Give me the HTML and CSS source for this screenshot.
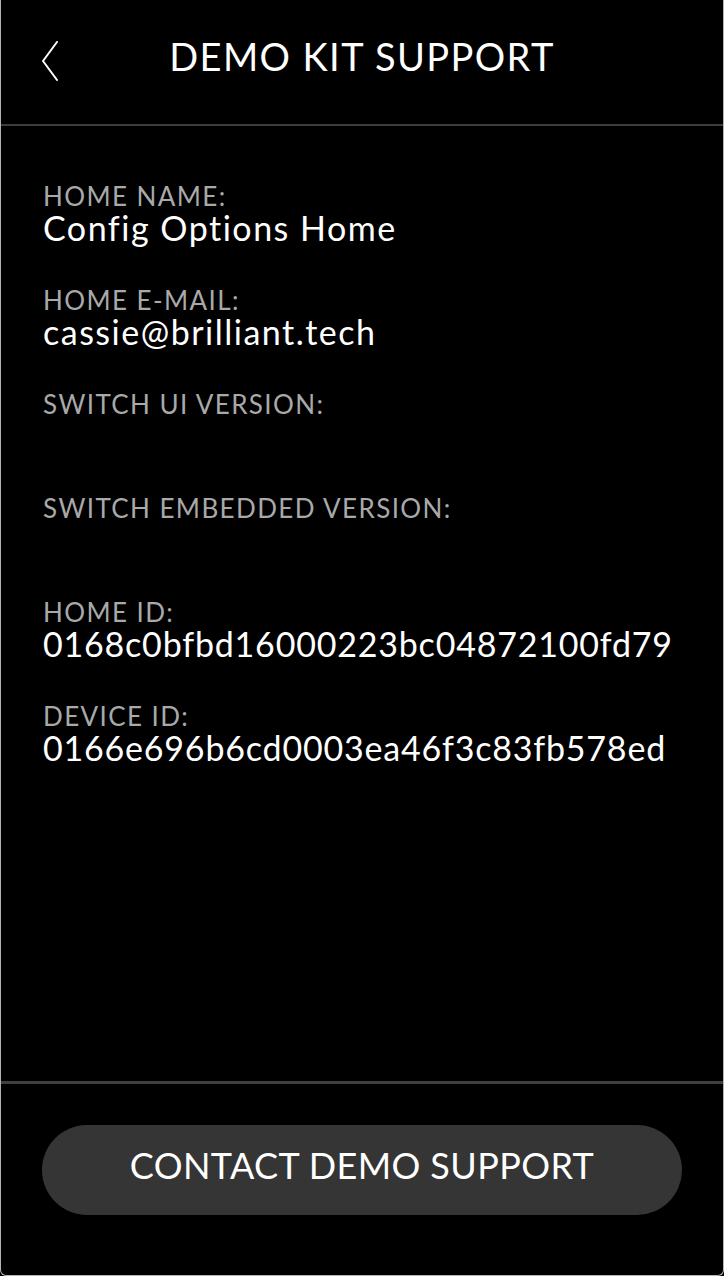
FILE: index.html
```html
<!DOCTYPE html>
<html>
<head>
    <title>Demo Kit Support</title>
    <link rel="stylesheet" href="styles.css">
</head>
<body>
    <div class="screen">
        <!-- Top bar -->
        <header class="top-bar">
            <button class="back-btn" type="button" aria-label="Back">
                <svg width="17" height="40" viewBox="0 0 17 40">
                    <path d="M16 1 L2 20 L16 39" fill="none" stroke="#fff" stroke-width="2" stroke-linecap="round" stroke-linejoin="round"/>
                </svg>
            </button>
            <h1 class="title">DEMO KIT SUPPORT</h1>
            <span class="spacer"></span>
        </header>

        <!-- Support details -->
        <main class="details">
            <div class="item">
                <div class="label">HOME NAME:</div>
                <div class="value">Config Options Home</div>
            </div>
            <div class="item">
                <div class="label">HOME E-MAIL:</div>
                <div class="value">cassie@brilliant.tech</div>
            </div>
            <div class="item">
                <div class="label">SWITCH UI VERSION:</div>
                <div class="value"></div>
            </div>
            <div class="item">
                <div class="label">SWITCH EMBEDDED VERSION:</div>
                <div class="value"></div>
            </div>
            <div class="item">
                <div class="label">HOME ID:</div>
                <div class="value id">0168c0bfbd16000223bc04872100fd79</div>
            </div>
            <div class="item">
                <div class="label">DEVICE ID:</div>
                <div class="value id">0166e696b6cd0003ea46f3c83fb578ed</div>
            </div>
        </main>

        <!-- Footer action -->
        <footer class="footer">
            <button class="contact-btn" type="button">CONTACT DEMO SUPPORT</button>
        </footer>
    </div>
</body>
</html>
```

FILE: styles.css
```css
html, body {
    margin: 0;
    padding: 0;
    background-color: #000;
}

body {
    font-family: Lato, "Noto Sans", sans-serif;
    color: #fff;
}

.screen {
    box-sizing: border-box;
    height: 1276px;
    display: flex;
    flex-direction: column;
    border-left: 1px solid #b4b4b4;
    border-right: 1px solid #b4b4b4;
    border-bottom: 1px solid #b4b4b4;
    border-radius: 0 0 6px 6px;
    overflow: hidden;
}

.top-bar {
    height: 126px;
    box-sizing: border-box;
    display: flex;
    align-items: flex-start;
    padding: 33px 40px 0 40px;
    border-bottom: 2px solid #3c3c3c;
}

.back-btn {
    width: 17px;
    padding: 0;
    margin-top: 8px;
    border: none;
    background: none;
    cursor: pointer;
}

.back-btn svg {
    display: block;
}

.spacer {
    width: 17px;
}

.title {
    flex: 1;
    margin: 0;
    text-align: center;
    font-size: 38px;
    line-height: 46px;
    letter-spacing: 1.4px;
    font-weight: normal;
}

.details {
    flex: 1;
    display: flex;
    flex-direction: column;
    gap: 40px;
    padding: 57px 0 0 42px;
}

.label {
    font-size: 26px;
    line-height: 26px;
    letter-spacing: 1.4px;
    color: #a9a9a9;
}

.value {
    font-size: 34px;
    line-height: 38px;
    min-height: 38px;
    letter-spacing: 1.5px;
}

.value.id {
    letter-spacing: 0.8px;
}

.footer {
    border-top: 3px solid #404040;
    padding: 41px 41px 60px 41px;
}

.contact-btn {
    display: block;
    box-sizing: border-box;
    width: 100%;
    height: 90px;
    padding: 0 0 10px 0;
    border: none;
    border-radius: 45px;
    background-color: #353535;
    color: #fff;
    font-family: Lato, "Noto Sans", sans-serif;
    font-size: 36px;
    letter-spacing: 0.4px;
    cursor: pointer;
}
```
